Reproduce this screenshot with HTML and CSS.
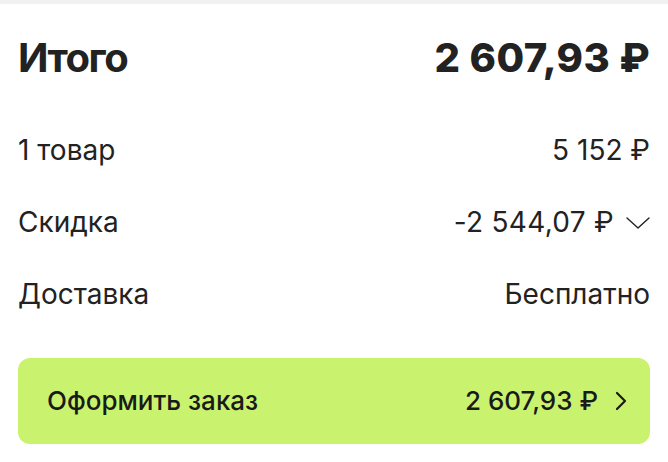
FILE: index.html
```html
<!DOCTYPE html>
<html lang="ru">
<head>
  <meta charset="UTF-8" />
  <title>Итого</title>
  <link rel="stylesheet" href="styles.css">
</head>
<body>
  <div class="stripe"></div>
  <div class="summary">
    <div class="total">
      <span class="total-label">Итого</span>
      <span class="total-price">2 607,93 ₽</span>
    </div>

    <div class="rows">
      <div class="row">
        <span>1 товар</span>
        <span>5 152 ₽</span>
      </div>
      <div class="row">
        <span>Скидка</span>
        <span class="discount">
          -2 544,07 ₽
          <svg class="chevron-down" width="24" height="12" viewBox="0 0 24 12">
            <path d="M1 1 L12 11 L23 1" fill="none" stroke="#222" stroke-width="1.4" stroke-linecap="round" stroke-linejoin="round"/>
          </svg>
        </span>
      </div>
      <div class="row">
        <span>Доставка</span>
        <span>Бесплатно</span>
      </div>
    </div>

    <button class="checkout" type="button">
      <span>Оформить заказ</span>
      <span class="checkout-price">
        2 607,93 ₽
        <svg class="chevron-right" width="14" height="20" viewBox="0 0 14 20">
          <path d="M3 2 L11 10 L3 18" fill="none" stroke="#1a1a1a" stroke-width="2.2" stroke-linecap="round" stroke-linejoin="round"/>
        </svg>
      </span>
    </button>
  </div>
</body>
</html>
```

FILE: styles.css
```css
body {
  margin: 0;
  background: #fff;
  color: #222;
  font-family: Inter, "Noto Sans", sans-serif;
}

.stripe {
  height: 4px;
  background: #f1f1f1;
}

.summary {
  padding: 30px 18px 0;
}

.total {
  display: flex;
  justify-content: space-between;
  font-size: 40px;
  line-height: 48px;
  font-weight: 700;
}

.total-label {
  letter-spacing: -1.5px;
}

.total-price {
  font-weight: 800;
  letter-spacing: 0.4px;
}

.rows {
  display: flex;
  flex-direction: column;
  gap: 32px;
  margin-top: 48px;
}

.row {
  display: flex;
  justify-content: space-between;
  font-size: 28px;
  line-height: 40px;
}

.discount {
  display: flex;
  align-items: center;
  gap: 12px;
  letter-spacing: 0.3px;
}

.chevron-down {
  margin-top: 2px;
}

.checkout {
  display: flex;
  align-items: center;
  justify-content: space-between;
  width: 100%;
  height: 86px;
  margin-top: 44px;
  padding: 0 22px 0 29px;
  background: #c9f36f;
  color: #1a1a1a;
  border: none;
  border-radius: 12px;
  font-family: inherit;
  font-size: 26px;
  line-height: 32px;
  font-weight: 500;
  cursor: pointer;
}

.checkout-price {
  display: flex;
  align-items: center;
  gap: 16px;
}
```
